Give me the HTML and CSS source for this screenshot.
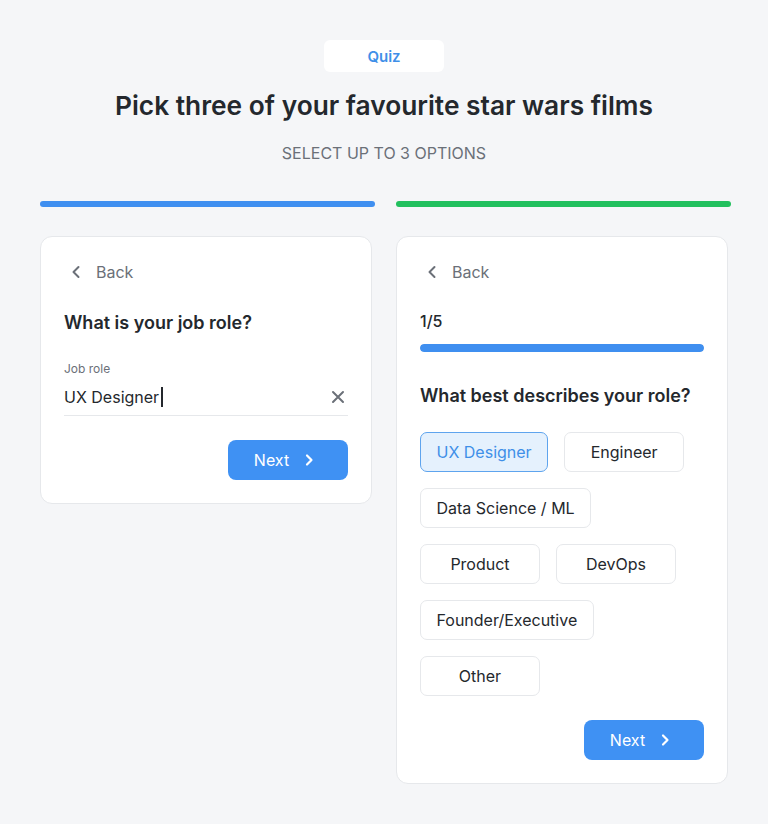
FILE: index.html
```html
<!DOCTYPE html>
<html lang="en">
<head>
<meta charset="utf-8">
<title>Quiz</title>
<link rel="stylesheet" href="styles.css">
</head>
<body>
<main class="page">
  <header class="intro">
    <div class="pill">Quiz</div>
    <h1 class="title">Pick three of your favourite star wars films</h1>
    <p class="subtitle">SELECT UP TO 3 OPTIONS</p>
  </header>
  <section class="columns">
    <div class="column">
      <div class="bar bar-blue"></div>
      <div class="card">
        <button class="back">
          <svg class="back-icon" width="24" height="24" viewBox="0 0 24 24" fill="none" stroke="currentColor" stroke-width="2" stroke-linecap="round" stroke-linejoin="round"><path d="M14.5 7 L9.5 12 L14.5 17"/></svg>
          <span>Back</span>
        </button>
        <h2 class="question q-first">What is your job role?</h2>
        <label class="field-label">Job role</label>
        <div class="field">
          <span class="field-value">UX Designer<span class="caret"></span></span>
          <svg class="clear" width="20" height="20" viewBox="0 0 20 20" fill="none" stroke="currentColor" stroke-width="2" stroke-linecap="round"><path d="M5 5 L15 15 M15 5 L5 15"/></svg>
        </div>
        <div class="actions">
          <button class="next">Next
            <svg width="20" height="20" viewBox="0 0 20 20" fill="none" stroke="currentColor" stroke-width="2.2" stroke-linecap="round" stroke-linejoin="round"><path d="M8 5.5 L12.5 10 L8 14.5"/></svg>
          </button>
        </div>
      </div>
    </div>
    <div class="column">
      <div class="bar bar-green"></div>
      <div class="card">
        <button class="back">
          <svg class="back-icon" width="24" height="24" viewBox="0 0 24 24" fill="none" stroke="currentColor" stroke-width="2" stroke-linecap="round" stroke-linejoin="round"><path d="M14.5 7 L9.5 12 L14.5 17"/></svg>
          <span>Back</span>
        </button>
        <div class="step">1/5</div>
        <div class="progress"><div class="progress-fill"></div></div>
        <h2 class="question q-second">What best describes your role?</h2>
        <div class="chips">
          <button class="chip chip-selected">UX Designer</button>
          <button class="chip">Engineer</button>
          <button class="chip">Data Science / ML</button>
          <button class="chip">Product</button>
          <button class="chip">DevOps</button>
          <button class="chip">Founder/Executive</button>
          <button class="chip">Other</button>
        </div>
        <div class="actions">
          <button class="next">Next
            <svg width="20" height="20" viewBox="0 0 20 20" fill="none" stroke="currentColor" stroke-width="2.2" stroke-linecap="round" stroke-linejoin="round"><path d="M8 5.5 L12.5 10 L8 14.5"/></svg>
          </button>
        </div>
      </div>
    </div>
  </section>
</main>
</body>
</html>
```
FILE: styles.css
```css
* { box-sizing: border-box; }
html, body { margin: 0; padding: 0; }
body {
  background: #f5f6f8;
  font-family: Inter, "Noto Sans", sans-serif;
  color: #24282d;
  width: 768px;
  height: 824px;
  overflow: hidden;
}
.page { padding-top: 40px; }
.intro {
  display: flex;
  flex-direction: column;
  align-items: center;
}
.pill {
  width: 120px;
  height: 32px;
  background: #fff;
  border-radius: 6px;
  color: #3f8fe8;
  font-size: 15px;
  font-weight: 600;
  display: flex;
  align-items: center;
  justify-content: center;
}
.title {
  margin: 18px 0 0;
  font-size: 26.3px;
  line-height: 32px;
  font-weight: 600;
  letter-spacing: 0;
  color: #24282d;
}
.subtitle {
  margin: 21px 0 0;
  font-size: 16px;
  line-height: 20px;
  color: #6b7078;
  font-weight: 400;
}
.columns {
  margin-top: 38px;
  padding-left: 40px;
  display: grid;
  grid-template-columns: 335px 335px;
  column-gap: 21px;
  align-items: start;
}
.column { display: flex; flex-direction: column; }
.bar { height: 6px; border-radius: 3px; }
.bar-blue { background: #3f8ff0; }
.bar-green { background: #22c05e; }
.card {
  margin-top: 29px;
  width: 332px;
  background: #fff;
  border: 1px solid #e6e8eb;
  border-radius: 12px;
  padding: 23px 23px 23px;
}
button { font-family: inherit; }
.back {
  display: flex;
  align-items: center;
  gap: 8px;
  border: 0;
  background: none;
  padding: 0;
  height: 24px;
  color: #6b7078;
  font-size: 16px;
}
.question {
  margin: 0;
  font-size: 18px;
  line-height: 24px;
  font-weight: 600;
  color: #24282d;
}
.q-first { margin-top: 27px; }
.field-label {
  display: block;
  margin-top: 26px;
  font-size: 12px;
  line-height: 16px;
  color: #6b7078;
}
.field {
  margin-top: 8px;
  height: 31px;
  border-bottom: 1px solid #e6e8eb;
  display: flex;
  align-items: flex-start;
  justify-content: space-between;
  padding-top: 0;
}
.field-value {
  font-size: 16px;
  line-height: 24px;
  color: #24282d;
  display: inline-flex;
  align-items: center;
}
.caret {
  display: inline-block;
  width: 1.5px;
  height: 20px;
  background: #24282d;
  margin-left: 2px;
}
.clear { color: #6b7078; margin-top: 2px; }
.actions {
  display: flex;
  justify-content: flex-end;
  margin-top: 24px;
}
.next {
  width: 120px;
  height: 40px;
  border: 0;
  border-radius: 8px;
  background: #3f91f3;
  color: #fff;
  font-size: 16px;
  display: flex;
  align-items: center;
  justify-content: center;
  gap: 10px;
  padding: 0 3px 0 0;
}
.step {
  margin-top: 25px;
  font-size: 16px;
  line-height: 24px;
  font-weight: 500;
  color: #24282d;
}
.progress {
  margin-top: 11px;
  height: 8px;
  border-radius: 4px;
  background: #e6e8eb;
  overflow: hidden;
}
.progress-fill { width: 100%; height: 100%; background: #3f8ff0; border-radius: 4px; }
.q-second { margin-top: 32px; }
.chips {
  margin-top: 24px;
  display: flex;
  flex-wrap: wrap;
  gap: 16px;
}
.chip {
  min-width: 120px;
  height: 40px;
  padding: 0 15.5px;
  border: 1px solid #e6e8eb;
  border-radius: 7px;
  background: #fff;
  color: #24282d;
  font-size: 16px;
}
.chip-selected {
  background: #e5f1fd;
  border-color: #5ea4ee;
  color: #3f8fe8;
}
```
